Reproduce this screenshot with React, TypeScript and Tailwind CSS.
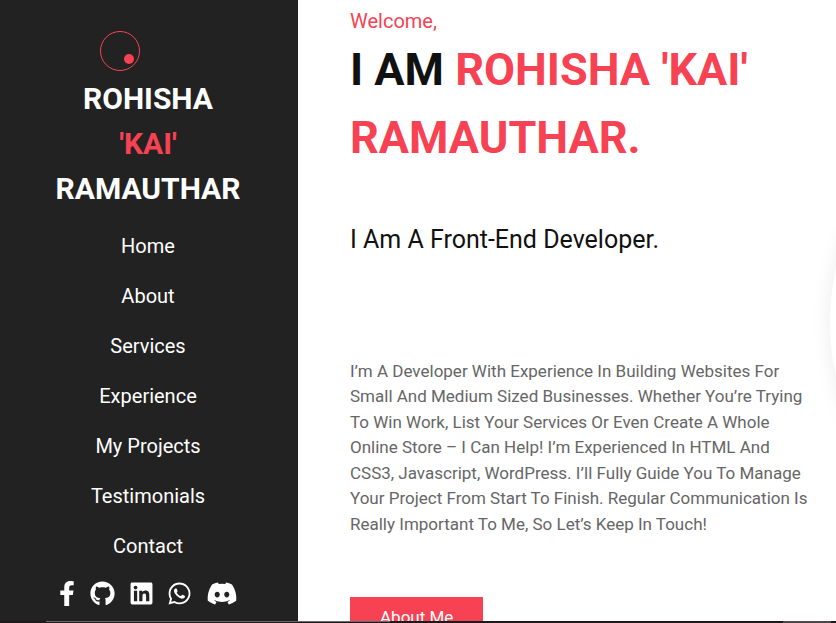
import { FaFacebookF } from "react-icons/fa";
import { FaDiscord, FaGithub, FaLinkedin, FaWhatsapp } from "react-icons/fa6";

const links = ["Home", "About", "Services", "Experience", "My Projects", "Testimonials", "Contact"];

const socials = [
  { name: "Facebook", Icon: FaFacebookF, size: "h-[25px] w-4" },
  { name: "GitHub", Icon: FaGithub, size: "h-[25px] w-[25px]" },
  { name: "LinkedIn", Icon: FaLinkedin, size: "h-[25px] w-[23px]" },
  { name: "WhatsApp", Icon: FaWhatsapp, size: "h-[25px] w-[23px]" },
  { name: "Discord", Icon: FaDiscord, size: "h-[25px] w-8" },
];

function Sidebar() {
  return (
    <aside className="flex w-[298px] shrink-0 flex-col items-center border-r-2 border-[#222] bg-[#222] px-12 pt-[31px] text-white">
      <div className="relative mr-14 size-10 rounded-full border border-[#f74254]">
        <span className="absolute right-[5px] bottom-[6px] size-[10px] rounded-full bg-[#f74254]" />
      </div>
      <a href="#home" className="mt-[5px] text-center text-[30px] leading-normal font-bold">
        ROHISHA <span className="block text-[#f74254]">'KAI'</span> RAMAUTHAR
      </a>
      <nav className="mt-[10px] w-full">
        <ul>
          {links.map((link) => (
            <li key={link}>
              <a href={"#" + link.toLowerCase().replace(" ", "-")} className="block py-[10px] text-center text-[20px] leading-[30px]">
                {link}
              </a>
            </li>
          ))}
        </ul>
      </nav>
      <div className="mt-[10px] flex gap-[15px]">
        {socials.map(({ name, Icon, size }) => (
          <a key={name} href={"#" + name.toLowerCase()} aria-label={name}>
            <Icon className={size} />
          </a>
        ))}
      </div>
    </aside>
  );
}

function Hero() {
  return (
    <main className="relative min-w-0 flex-1 overflow-hidden bg-white pr-6 pl-[52px] pt-[6px] text-[#111]">
      <div className="absolute top-[72px] left-[532px] size-[500px] rounded-full bg-white shadow-[0_0_20px_rgba(0,0,0,0.08)]" />
      <p className="text-[20px] leading-[30px] text-[#f74254]">Welcome,</p>
      <h1 className="text-[45px] leading-normal font-bold">
        I AM <span className="text-[#f74254]">ROHISHA 'KAI' RAMAUTHAR.</span>
      </h1>
      <h2 className="mt-[50px] text-[25px] leading-normal">I Am A Front-End Developer.</h2>
      <p className="mt-[100px] text-[17px] leading-normal text-[#666]">
        I’m A Developer With Experience In Building Websites For Small And Medium Sized Businesses. Whether You’re
        Trying To Win Work, List Your Services Or Even Create A Whole Online Store – I Can Help! I’m Experienced In HTML
        And CSS3, Javascript, WordPress. I’ll Fully Guide You To Manage Your Project From Start To Finish. Regular
        Communication Is Really Important To Me, So Let’s Keep In Touch!
      </p>
      <button type="button" className="mt-[60px] bg-[#f74254] px-[30px] py-2 text-[17px] leading-6 text-white">
        About Me
      </button>
    </main>
  );
}

export default function App() {
  return (
    <div className="flex h-screen flex-col overflow-hidden bg-white font-[Roboto,sans-serif]">
      <div className="flex min-h-0 flex-1">
        <Sidebar />
        <Hero />
      </div>
      <div className="flex h-[2px] shrink-0 bg-[#1d191b]">
        <div className="ml-[46px] h-px w-[344px] bg-[#6a6a6a]" />
        <div className="mr-[5px] ml-auto w-12 bg-[#4d494a]" />
      </div>
    </div>
  );
}
